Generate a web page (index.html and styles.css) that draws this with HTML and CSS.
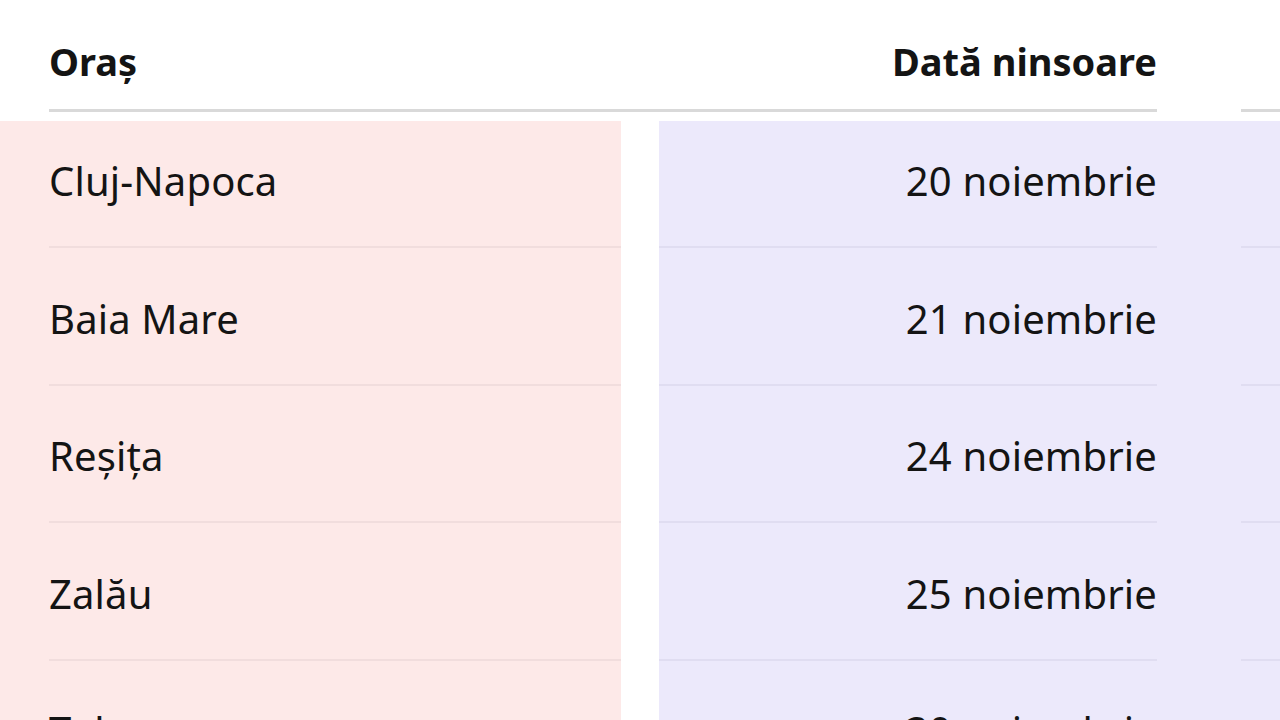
FILE: index.html
```html
<!DOCTYPE html>
<html lang="ro">
<head>
<meta charset="utf-8">
<title>Ninsori</title>
<link rel="stylesheet" href="styles.css">
</head>
<body>
<div class="table">
  <div class="thead">
    <div class="th th-city">Oraș</div>
    <div class="th th-date">Dată ninsoare</div>
    <div class="th th-extra"></div>
  </div>
  <div class="tbody">
    <div class="tr first">
      <div class="td td-city"><span class="cell">Cluj-Napoca</span></div>
      <div class="sep"></div>
      <div class="td td-date"><span class="cell">20 noiembrie</span></div>
      <div class="td td-gap"></div>
      <div class="td td-extra"><span class="cell"></span></div>
    </div>
    <div class="tr">
      <div class="td td-city"><span class="cell">Baia Mare</span></div>
      <div class="sep"></div>
      <div class="td td-date"><span class="cell">21 noiembrie</span></div>
      <div class="td td-gap"></div>
      <div class="td td-extra"><span class="cell"></span></div>
    </div>
    <div class="tr">
      <div class="td td-city"><span class="cell">Reșița</span></div>
      <div class="sep"></div>
      <div class="td td-date"><span class="cell">24 noiembrie</span></div>
      <div class="td td-gap"></div>
      <div class="td td-extra"><span class="cell"></span></div>
    </div>
    <div class="tr">
      <div class="td td-city"><span class="cell">Zalău</span></div>
      <div class="sep"></div>
      <div class="td td-date"><span class="cell">25 noiembrie</span></div>
      <div class="td td-gap"></div>
      <div class="td td-extra"><span class="cell"></span></div>
    </div>
    <div class="tr">
      <div class="td td-city"><span class="cell">Tulcea</span></div>
      <div class="sep"></div>
      <div class="td td-date"><span class="cell">30 noiembrie</span></div>
      <div class="td td-gap"></div>
      <div class="td td-extra"><span class="cell"></span></div>
    </div>
  </div>
</div>
</body>
</html>
```
FILE: styles.css
```css
html, body {
  margin: 0;
  padding: 0;
  background: #ffffff;
  overflow: hidden;
}

body {
  font-family: "Noto Sans", "Open Sans", sans-serif;
  color: #141414;
  font-size: 40px;
  width: 1280px;
  height: 720px;
}

.table {
  width: 1400px;
}

.thead {
  display: flex;
  height: 112px;
  padding-left: 49px;
  box-sizing: border-box;
  align-items: stretch;
}

.th {
  font-weight: 700;
  font-size: 38px;
  line-height: 1;
  display: flex;
  align-items: flex-end;
  padding-bottom: 29px;
  border-bottom: 3px solid #d9d9d9;
  box-sizing: border-box;
}

.th-city {
  width: 610px;
}

.th-date {
  width: 498px;
  justify-content: flex-end;
}

.th-extra {
  margin-left: 84px;
  flex: 1;
}

.tbody {
  padding-top: 9px;
}

.tr {
  display: grid;
  grid-template-columns: 621px 38px 498px 84px 1fr;
  height: 137.5px;
}

.tr.first {
  height: 127px;
}

.td {
  display: flex;
  align-items: stretch;
}

.td-city {
  background: #fde9e8;
  padding-left: 49px;
}

.sep {
  background: #ffffff;
}

.td-date,
.td-gap,
.td-extra {
  background: #ece9fb;
}

.cell {
  flex: 1;
  display: flex;
  align-items: flex-end;
  line-height: 1;
  letter-spacing: 0.15px;
  padding-bottom: 45px;
}

.td-city .cell {
  border-bottom: 2px solid #f1dddd;
}

.td-date .cell {
  justify-content: flex-end;
  border-bottom: 2px solid #e0ddf1;
}

.td-extra .cell {
  border-bottom: 2px solid #e0ddf1;
}
```
